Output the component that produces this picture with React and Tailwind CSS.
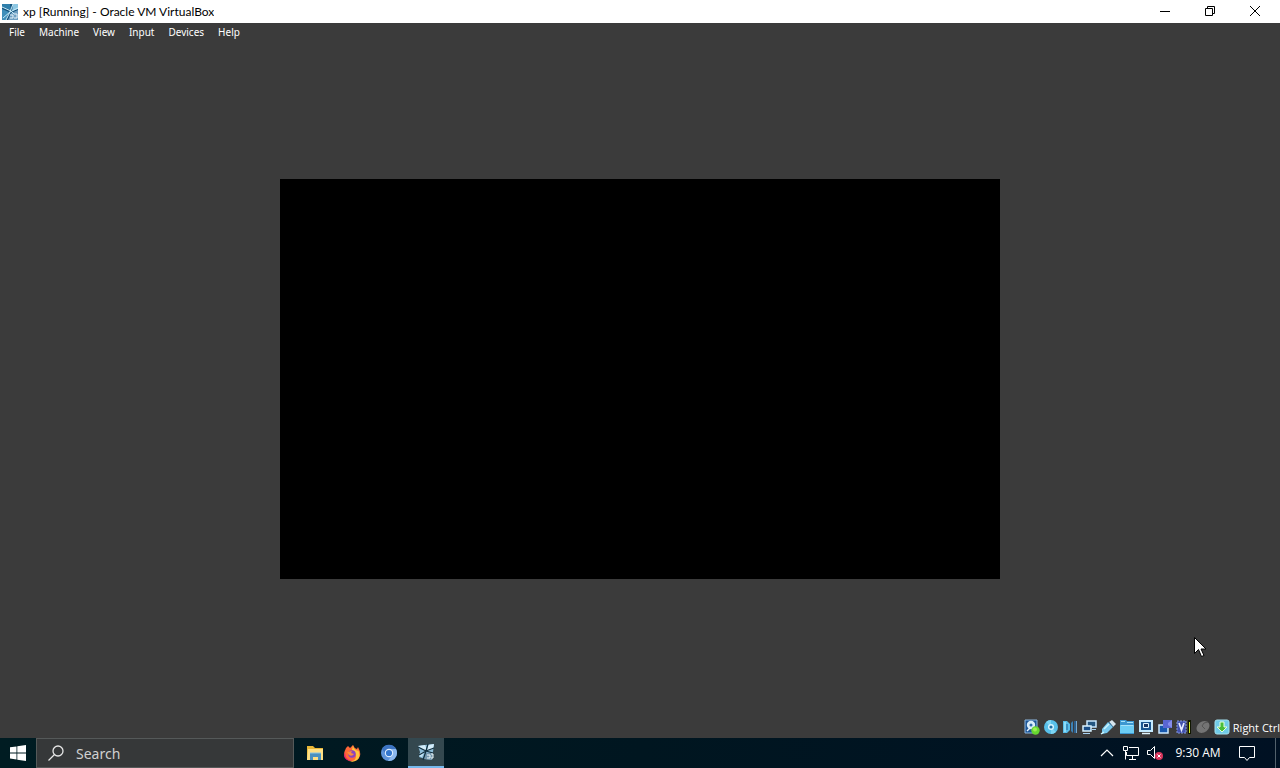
import React from "react";

function VBoxIcon() {
  return (
    <svg viewBox="0 0 16 16" className="size-4 shrink-0" aria-hidden="true">
      <path d="M0 0h16v16H0z" fill="#14527c" />
      <path d="M0 0h8l1 6-9-3z" fill="#2f7fab" />
      <path d="M0 5 7 8 4 16H0z" fill="#3f8fba" />
      <path d="m11 0h5v5L10 7z" fill="#8cc6e2" />
      <path d="m9 9 7-3v10H6z" fill="#6f9fc2" />
      <path d="m0 3 9 4 3 3M11 0 8 8l-4 8M16 4 8 8l-7 6" stroke="#c9ecfa" fill="none" />
      <path d="M8 11h3v3H8m4-4h3v4h-3" stroke="#e8f3fa" fill="none" />
    </svg>
  );
}

function TaskVBoxIcon() {
  return (
    <svg viewBox="0 0 18 18" className="size-[18px]" aria-hidden="true">
      <path d="m1 3 7-1 9-1-1 8-1 8-7-1-6-2 1-5z" fill="#8bbcd8" />
      <path d="m1 3 7-1 2 5-2 1zM11 2l6-1-1 5-6 2z" fill="#d3edfa" />
      <path d="m3 10 4-1-2 5-3-1z" fill="#c4e4f5" />
      <path d="m9 10 7-1-1 8-8-1z" fill="#7396ad" />
      <path d="m1 4 8 4 7 2M11 1 9 8l-3 9M17 5 9 8l-7 4" stroke="#12303f" strokeWidth="1.3" fill="none" />
      <path d="M10 12h3v3h-3m4-4h2v4h-2" stroke="#f0fafc" fill="none" />
    </svg>
  );
}

const devices = [
  {
    name: "Hard disks",
    art: (
      <>
        <path d="M1 1h12v13H1z" fill="#1d5596" stroke="#8eb8e0" />
        <circle cx="7" cy="6" r="4.2" fill="#d8edfa" />
        <circle cx="7" cy="6" r="1.5" fill="#306aaa" />
        <path d="m6 9-3 3" stroke="#eef8ff" strokeWidth="1.5" />
        <circle cx="11.5" cy="11.5" r="4.2" fill="#67d830" />
        <circle cx="11" cy="10.5" r="2" fill="#9def54" />
      </>
    ),
  },
  {
    name: "Optical drives",
    art: (
      <>
        <circle cx="8" cy="8" r="7" fill="#58c0ea" />
        <path d="M8 8 3 3a7 7 0 0 1 5-2zM8 8l5 5a7 7 0 0 1-5 2z" fill="#7dd5f4" />
        <circle cx="8" cy="8" r="3" fill="#d7f5ff" />
        <circle cx="8" cy="8" r="1.6" fill="#1d6ea5" />
      </>
    ),
  },
  {
    name: "Audio",
    art: (
      <>
        <path d="M1 2h4l3 3v6l-3 3H1z" fill="#58bdea" />
        <path d="M2 3h2v10H2z" fill="#8ddcf8" />
        <path d="M5 5v6" stroke="#1e5f93" />
        <path d="m9 4 2-2v12l-2-2z" fill="#3c80b4" />
        <path d="M12 2h2v12h-2z" fill="#2c5d8a" />
        <path d="M14.500 2v12" stroke="#77a9cf" />
      </>
    ),
  },
  {
    name: "Network",
    art: (
      <>
        <path d="M6 2h9v6H6z" fill="#245681" stroke="#c8e8ff" strokeWidth="1.5" />
        <path d="M2 7h8v5H2z" fill="#194e88" stroke="#d8f2ff" strokeWidth="1.5" />
        <path d="M2 14.500h7M11 10.500h4" stroke="#a9d3f2" />
      </>
    ),
  },
  {
    name: "USB",
    art: (
      <>
        <path d="m2 10 6-7 5 5-6 6-5 1z" fill="#78c9ef" />
        <path d="m9 3 3-2 4 4-3 3z" fill="#d5e4ed" />
        <path d="m9 3 4 5" stroke="#3777a4" />
        <path d="m4 10 5-5M1 15l3-2" stroke="#cbf5ff" strokeWidth="1.5" />
      </>
    ),
  },
  {
    name: "Shared folders",
    art: (
      <>
        <path d="M1 1h6l1 1h7v13H1z" fill="#3c97d1" />
        <path d="M1 6h14v8H1z" fill="#6ccdf5" />
        <path d="M2 2.500h4m2 1h6M2 6.500h12" stroke="#a5e2fa" />
      </>
    ),
  },
  {
    name: "Display",
    art: (
      <>
        <path d="M2 2h12v10H2z" fill="#195690" stroke="#c4eaff" strokeWidth="2" />
        <path d="M5.500 4.500h5v4h-5z" fill="#1a3762" stroke="#e0f5ff" />
        <path d="M4 14.500h8" stroke="#e0f5ff" strokeWidth="1.5" />
      </>
    ),
  },
  {
    name: "Recording",
    art: (
      <>
        <path d="M2 6h9v8H2z" fill="#1858ad" stroke="#cbe9ff" strokeWidth="1.5" />
        <path d="M6 1h9v8H6z" fill="#5966d2" />
        <path d="m11 4 4-3v8l-4-3z" fill="#868ceb" />
      </>
    ),
  },
  {
    name: "Processor",
    art: (
      <>
        <path d="M1 2h9v12H1z" fill="#4251ad" stroke="#8399de" strokeDasharray="2 1" />
        <path d="m3 4 2.500 7L8 4" stroke="#e7edff" strokeWidth="1.7" fill="none" />
        <path d="M12 1h3v14h-3z" fill="#101600" />
        <path d="M13 3h1v11h-1z" fill="#d8f229" />
      </>
    ),
  },
  {
    name: "Mouse integration",
    art: (
      <>
        <ellipse cx="8" cy="8" rx="7" ry="5.5" transform="rotate(-38 8 8)" fill="#747474" />
        <path d="M7 7q1-4 6-4M7 7l3 3" stroke="#555" fill="none" />
      </>
    ),
  },
  {
    name: "Keyboard capture",
    art: (
      <>
        <rect x="1" y="1" width="14" height="14" rx="2" fill="#70cbe8" stroke="#a5e1ef" />
        <path d="M6 3h4v5h3l-5 5-5-5h3z" fill="#49bd38" stroke="#e4ffdc" />
      </>
    ),
  },
];

const apps = [
  {
    name: "File Explorer",
    art: (
      <>
        <path d="M1 2h6l2 2h8v12H1z" fill="#e9b737" />
        <path d="M2 5h15v11H1z" fill="#ffe083" />
        <path d="M4 9h11v7h-3v-3H7v3H4z" fill="#4b91bf" />
        <path d="M4 9h11" stroke="#8bc7e3" />
      </>
    ),
  },
  {
    name: "Firefox",
    art: (
      <>
        <path d="M3 4 5 2l2 2 3-3q1 3 4 4l1-2q4 7 1 11c-3 5-12 4-14-1C0 9 2 7 3 4z" fill="#ff6738" />
        <path d="M10 1q0 4 5 6l-1-3q5 8 0 12-4 3-8 1 7 1 7-5 0-4-4-6z" fill="#ffc43b" />
        <path d="M2 8q0 8 7 9-7 0-8-5z" fill="#ed2569" />
        <circle cx="9" cy="10" r="3.7" fill="#8c43bf" />
        <path d="m4 8 5-1-1 2 3 1q-2 3-5 1z" fill="#ff8b37" />
      </>
    ),
  },
  {
    name: "Chromium",
    art: (
      <>
        <circle cx="9" cy="9" r="8" fill="#5d93da" />
        <path d="M2 5a8 8 0 0 1 14 0H9L5 9z" fill="#3d74c2" />
        <path d="m12 11-4 6a8 8 0 0 0 9-8c0-2-1-4-1-4H9z" fill="#8cb8ee" />
        <circle cx="9" cy="9" r="4.2" fill="#e0efff" />
        <circle cx="9" cy="9" r="3.1" fill="#3477ce" />
      </>
    ),
  },
];

export default function App() {
  return (
    <div className="relative flex h-screen min-h-96 flex-col overflow-hidden bg-[#3b3b3b] font-['Noto_Sans','Open_Sans',sans-serif] text-white">
      <header className="flex h-[23px] shrink-0 items-center bg-white text-black">
        <div className="flex min-w-0 flex-1 items-center gap-[5px] pl-[2px]">
          <VBoxIcon />
          <h1 className="truncate font-['Lato',sans-serif] text-[12px] leading-4">xp [Running] - Oracle VM VirtualBox</h1>
        </div>
        <div className="flex h-full items-center pr-[3px] pb-[2px]">
          <button aria-label="Minimize" className="grid h-full w-[45px] place-items-center">
            <svg viewBox="0 0 12 12" className="size-3"><path d="M1 6.5h10" stroke="black" /></svg>
          </button>
          <button aria-label="Restore" className="grid h-full w-[45px] place-items-center">
            <svg viewBox="0 0 12 12" className="size-3" fill="none" stroke="black"><path d="M1.5 3.5h7v7h-7zM3.5 3V1.5h7v7H9" /></svg>
          </button>
          <button aria-label="Close" className="grid h-full w-[45px] place-items-center">
            <svg viewBox="0 0 12 12" className="size-3"><path d="m1 1 10 10M11 1 1 11" stroke="black" /></svg>
          </button>
        </div>
      </header>

      <nav aria-label="Virtual machine menu" className="flex h-[18px] shrink-0 items-center gap-[14px] px-[9px] text-[10px] leading-4">
        <button>File</button>
        <button>Machine</button>
        <button>View</button>
        <button>Input</button>
        <button>Devices</button>
        <button>Help</button>
      </nav>

      <main className="flex min-h-0 flex-1 items-center justify-center">
        <div aria-label="Guest display" className="aspect-[9/5] w-[56.25%] bg-black" />
      </main>

      <div className="flex h-[21px] shrink-0 items-start justify-end gap-[3px] pt-[2px]">
        {devices.map((device) => (
          <button key={device.name} aria-label={device.name}>
            <svg viewBox="0 0 16 16" className="block size-4">{device.art}</svg>
          </button>
        ))}
        <span className="font-['Open_Sans',sans-serif] text-[11px] leading-[18px] whitespace-nowrap">Right Ctrl</span>
      </div>

      <footer className="flex h-[30px] shrink-0 items-center bg-linear-to-r from-[#001c22] via-[#001620] to-[#001123]">
        <button aria-label="Start" className="grid h-full w-9 place-items-center">
          <svg viewBox="0 0 16 16" className="size-4" fill="white"><path d="m0 2.3 6.5-.9v6.1H0zM7.3 1.3 16 0v7.5H7.3zM0 8.4h6.5v6.1L0 13.6zM7.3 8.4H16V16l-8.7-1.3z" /></svg>
        </button>
        <label className="flex h-full w-[258px] items-center gap-3 border border-[#555959] bg-[#363839] pl-[11px]">
          <svg viewBox="0 0 16 16" className="size-4 shrink-0" fill="none" stroke="#e6e6e6" strokeWidth="1.3"><circle cx="10" cy="6" r="5" /><path d="m6.5 9.5-6 6" /></svg>
          <input aria-label="Search" placeholder="Search" className="min-w-0 flex-1 bg-transparent pt-px text-[14px] leading-5 outline-none placeholder:text-[#d0d0d0]" />
        </label>
        <div className="ml-[3px] flex h-full gap-px">
          {apps.map((app) => (
            <button key={app.name} aria-label={app.name} className="grid h-full w-9 place-items-center">
              <svg viewBox="0 0 18 18" className="size-[18px]">{app.art}</svg>
            </button>
          ))}
          <button aria-label="VirtualBox" className="grid h-full w-9 place-items-center border-b-2 border-[#76b9ed] bg-[#34484f]">
            <TaskVBoxIcon />
          </button>
        </div>
        <div className="ml-auto flex h-full items-center">
          <button aria-label="Show hidden icons" className="grid h-full w-6 place-items-center">
            <svg viewBox="0 0 14 14" className="size-[14px]" fill="none" stroke="white" strokeWidth="1.2"><path d="m1 10 6-6 6 6" /></svg>
          </button>
          <button aria-label="Network" className="grid h-full w-6 place-items-center">
            <svg viewBox="0 0 18 18" className="size-[18px]" fill="none" stroke="white"><path d="M7 3.5h9.500v8H4.500V8M1.500 2.500h4v4h-4zM3.500 6.500v9M10.500 12v3.500M7 15.500h7" /></svg>
          </button>
          <button aria-label="Volume muted" className="grid h-full w-6 place-items-center">
            <svg viewBox="0 0 18 18" className="size-[18px]"><path d="M1.500 6.500h3l4-4v12l-4-4h-3z" fill="none" stroke="white" /><circle cx="13" cy="12" r="4" fill="#d7355c" /><path d="m11.500 10.500 3 3m0-3-3 3" stroke="white" /></svg>
          </button>
          <time className="w-[62px] text-center font-['Open_Sans',sans-serif] text-[12px] leading-4 whitespace-nowrap">9:30 AM</time>
          <button aria-label="Notifications" className="grid h-full w-9 place-items-center">
            <svg viewBox="0 0 18 18" className="size-[18px]" fill="none" stroke="white"><path d="M1.500 2.500h15v11h-5l-2.500 3-2.500-3h-5z" /></svg>
          </button>
          <button aria-label="Show desktop" className="ml-[10px] h-full w-[5px] border-l border-[#52616c]" />
        </div>
      </footer>

      <svg viewBox="0 0 12 20" className="absolute right-[74px] bottom-[111px] h-5 w-3" aria-hidden="true">
        <path d="M.5.5v16l4-4 3 7 2.500-1-3-6.500h5z" fill="white" stroke="black" />
      </svg>
    </div>
  );
}
